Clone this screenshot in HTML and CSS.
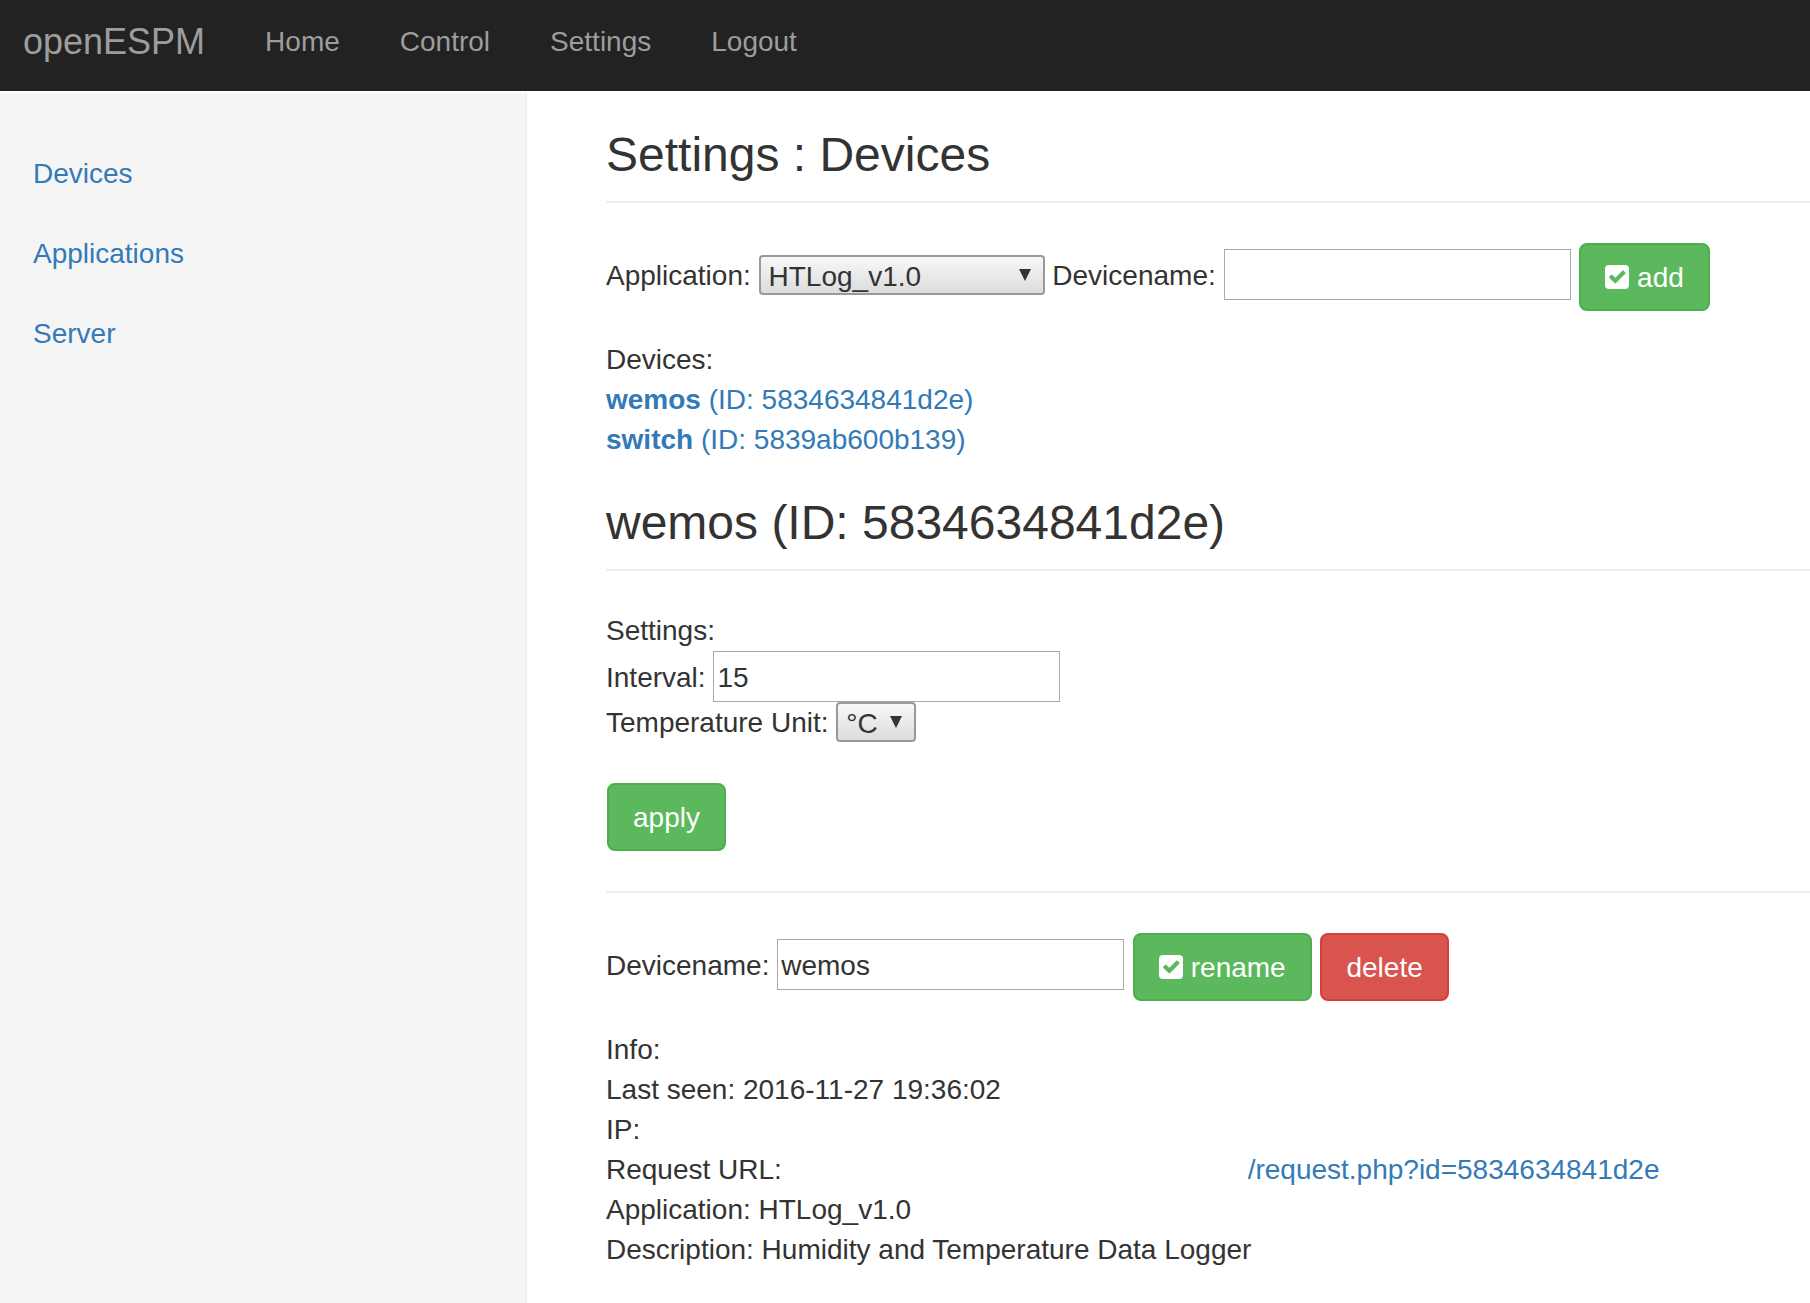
FILE: index.html
```html
<!DOCTYPE html>
<html lang="en">
<head>
<meta charset="utf-8">
<meta name="viewport" content="width=device-width, initial-scale=1">
<title>openESPM</title>
<link rel="stylesheet" href="styles.css">
</head>
<body>
<nav class="navbar">
  <a class="brand" href="#">openESPM</a>
  <a href="#">Home</a>
  <a href="#">Control</a>
  <a href="#">Settings</a>
  <a href="#">Logout</a>
</nav>
<div class="layout">
  <aside class="sidebar">
    <a href="#">Devices</a>
    <a href="#">Applications</a>
    <a href="#">Server</a>
  </aside>
  <main class="main">
    <h1 class="page-header">Settings : Devices</h1>
    <form class="form-row">
      <label for="app">Application:</label>
      <span class="select select-wide"><select id="app"><option>HTLog_v1.0</option></select><svg class="arrow" viewBox="0 0 12 12"><path d="M0 0h12L6 12z"/></svg></span>
      <label for="new-name">Devicename:</label>
      <input class="field" id="new-name" type="text">
      <button class="btn btn-success" type="button"><svg class="check" viewBox="0 0 24 24"><path fill-rule="evenodd" d="M4 0h16a4 4 0 0 1 4 4v16a4 4 0 0 1-4 4H4a4 4 0 0 1-4-4V4a4 4 0 0 1 4-4zM4.400 11.500a1 1 0 0 0 0 1.400l5.200 5.200a1 1 0 0 0 1.400 0l9.300-9.300a1 1 0 0 0 0-1.400l-1.600-1.600a1 1 0 0 0-1.400 0l-7 7-2.900-2.900a1 1 0 0 0-1.400 0z"/></svg> add</button>
    </form>
    <section class="devices">
      <div>Devices:</div>
      <div><a href="#"><b>wemos</b> (ID: 5834634841d2e)</a></div>
      <div><a href="#"><b>switch</b> (ID: 5839ab600b139)</a></div>
    </section>
    <h1 class="page-header">wemos (ID: 5834634841d2e)</h1>
    <form class="settings">
      <div>Settings:</div>
      <div><label for="interval">Interval:</label> <input class="field" id="interval" type="text" value="15"></div>
      <div><label for="unit">Temperature Unit:</label> <span class="select select-unit"><select id="unit"><option>°C</option></select><svg class="arrow" viewBox="0 0 12 12"><path d="M0 0h12L6 12z"/></svg></span></div>
      <button class="btn btn-success apply" type="button">apply</button>
    </form>
    <hr>
    <form class="form-row">
      <label for="name">Devicename:</label>
      <input class="field" id="name" type="text" value="wemos">
      <button class="btn btn-success" type="button"><svg class="check" viewBox="0 0 24 24"><path fill-rule="evenodd" d="M4 0h16a4 4 0 0 1 4 4v16a4 4 0 0 1-4 4H4a4 4 0 0 1-4-4V4a4 4 0 0 1 4-4zM4.400 11.500a1 1 0 0 0 0 1.400l5.200 5.200a1 1 0 0 0 1.400 0l9.300-9.300a1 1 0 0 0 0-1.400l-1.600-1.600a1 1 0 0 0-1.400 0l-7 7-2.900-2.900a1 1 0 0 0-1.400 0z"/></svg> rename</button>
      <button class="btn btn-danger" type="button">delete</button>
    </form>
    <section class="info">
      <div>Info:</div>
      <div>Last seen: 2016-11-27 19:36:02</div>
      <div>IP:</div>
      <div>Request URL: <a href="#"><span class="host"></span>/request.php?id=5834634841d2e</a></div>
      <div>Application: HTLog_v1.0</div>
      <div>Description: Humidity and Temperature Data Logger</div>
    </section>
  </main>
</div>
</body>
</html>
```

FILE: styles.css
```css
* { box-sizing: border-box; }

body {
  margin: 0;
  min-height: 100vh;
  display: flex;
  flex-direction: column;
  background: #fff;
  color: #333;
  font-family: "Liberation Sans", Arial, sans-serif;
  font-size: 28px;
  line-height: 40px;
}

a { color: #337ab7; text-decoration: none; }

.navbar {
  display: flex;
  align-items: center;
  gap: 60px;
  padding: 22px 23px 29px;
  margin-bottom: 2px;
  background: #222;
}
.navbar a { color: #9d9d9d; }
.navbar .brand { font-size: 36px; }

.layout {
  flex: 1;
  display: grid;
  grid-template-columns: 527px 1fr;
}

.sidebar {
  padding-top: 41px;
  background: #f5f5f5;
  border-right: 2px solid #eee;
}
.sidebar a { display: block; padding: 20px 33px; }

.main { padding: 35px 0 28px 79px; }

.page-header {
  margin: 0 0 40px;
  padding-bottom: 20px;
  border-bottom: 2px solid #eee;
  font-size: 48px;
  font-weight: normal;
  line-height: 53px;
}

.form-row { margin-bottom: 29px; }
.devices { margin-bottom: 36px; }

.field {
  width: 347px;
  height: 51px;
  padding: 3px 3px 0;
  border: 1px solid #a9a9a9;
  background: #fff;
  color: #333;
  font: inherit;
}

.select {
  position: relative;
  display: inline-block;
  height: 40px;
  vertical-align: -1px;
}
.select select {
  appearance: none;
  width: 100%;
  height: 40px;
  padding: 0 8px;
  border: 2px solid #999;
  border-radius: 4px;
  background: linear-gradient(#f8f8f8, #dcdcdc);
  color: #333;
  font: inherit;
  vertical-align: baseline;
}
.select-wide { width: 286px; }
.select-unit { width: 80px; }
.arrow {
  position: absolute;
  top: 14px;
  right: 14px;
  width: 12px;
  height: 12px;
  fill: #333;
  pointer-events: none;
}

.btn {
  height: 68px;
  margin-left: 1px;
  padding: 2px 24px 0;
  border: 2px solid;
  border-radius: 8px;
  color: #fff;
  font: inherit;
  vertical-align: -2px;
}
.btn-success { background: #5cb85c; border-color: #4cae4c; }
.btn-danger { background: #d9534f; border-color: #d43f3a; }
.apply { display: block; margin-top: 40px; }

.check { width: 24px; height: 24px; fill: #fff; vertical-align: -2px; }

hr { margin: 40px 0; border: 0; border-top: 2px solid #eee; }

.host { display: inline-block; width: 458px; }
```
